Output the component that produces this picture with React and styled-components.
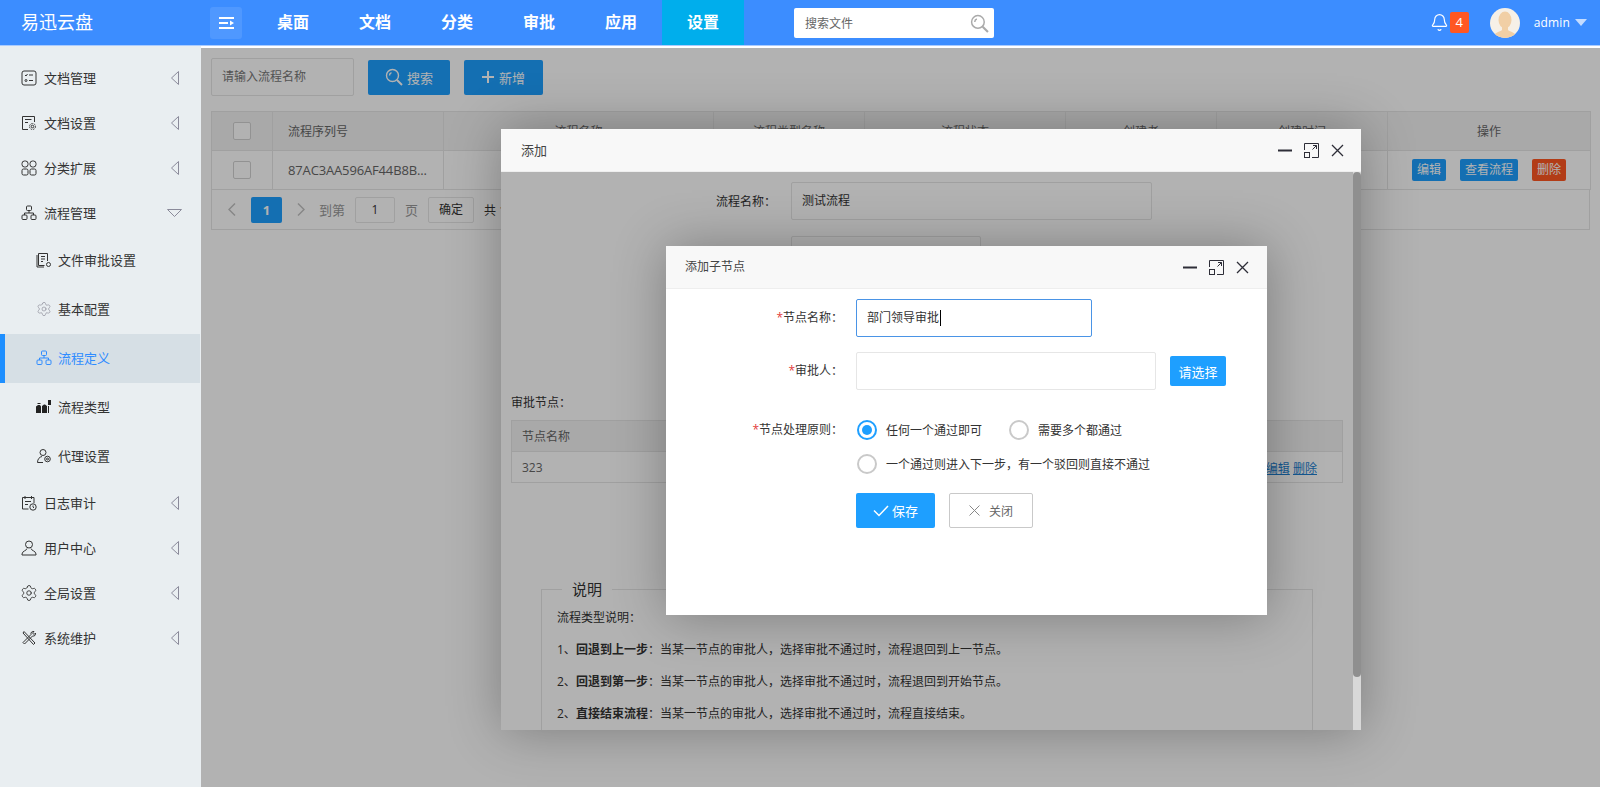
import React from 'react'
import styled, { createGlobalStyle } from 'styled-components'
import { Bell, Settings } from 'lucide-react'

const GlobalStyle = createGlobalStyle`
    html, body, #root {
        margin: 0;
        height: 100%;
    }
    body {
        font-family: "Open Sans", "Noto Sans CJK SC", sans-serif;
        font-size: 12px;
        color: #333;
        background: #fff;
        overflow: hidden;
    }
    * {
        box-sizing: border-box;
    }
`

const Page = styled.div`
    width: 1600px;
    height: 787px;
    display: flex;
    flex-direction: column;
    overflow: hidden;
`

const Header = styled.header`
    height: 46px;
    flex: none;
    display: flex;
    align-items: flex-start;
    background: #3c8dff;
    border-bottom: 1px solid #a9cbff;
    color: #fff;
`

const Logo = styled.div`
    width: 210px;
    height: 45px;
    padding-left: 21px;
    line-height: 45px;
    font-size: 18px;
`

const Toggle = styled.div`
    width: 32px;
    height: 32px;
    margin: 7px 10px 0 0;
    border-radius: 3px;
    background: #4f98ff;
    display: flex;
    align-items: center;
    justify-content: center;
`

const Nav = styled.nav`
    display: flex;
`

const NavItem = styled.div`
    width: 82px;
    height: 45px;
    line-height: 45px;
    text-align: center;
    font-size: 16px;
    font-weight: 700;
    background: ${p => (p.$active ? '#00aeec' : 'transparent')};
`

const TopSearch = styled.div`
    width: 200px;
    height: 30px;
    margin: 8px 0 0 50px;
    padding: 0 5px 0 11px;
    background: #fff;
    border-radius: 2px;
    color: #666;
    display: flex;
    align-items: center;
    justify-content: space-between;
`

const HeaderRight = styled.div`
    margin-left: auto;
    padding-right: 13px;
    height: 45px;
    display: flex;
    align-items: center;
`

const Badge = styled.span`
    width: 19px;
    height: 21px;
    margin-left: 1px;
    border-radius: 2px;
    background: #ff5722;
    font-size: 13px;
    text-align: center;
    line-height: 21px;
`

const Avatar = styled.div`
    width: 30px;
    height: 30px;
    margin-left: 21px;
    border-radius: 50%;
    overflow: hidden;
`

const UserName = styled.span`
    margin-left: 14px;
    font-size: 12px;
    letter-spacing: 0.15px;
`

const Caret = styled.span`
    width: 0;
    height: 0;
    margin-left: 5px;
    border-left: 6px solid transparent;
    border-right: 6px solid transparent;
    border-top: 7px solid #c4dcff;
`

const Body = styled.div`
    flex: 1;
    display: flex;
    min-height: 0;
`

const Sidebar = styled.aside`
    width: 201px;
    flex: none;
    padding-top: 10px;
    background: #e9eef1;
`

const MenuItem = styled.div`
    height: 45px;
    padding: 0 22px 2px 21px;
    display: flex;
    align-items: center;
    gap: 7px;
    font-size: 13px;
    color: #333;
    svg.arrow {
        margin-left: auto;
    }
    svg.arrow-down {
        margin: 0 -3px 0 auto;
    }
`

const SubItem = styled.div`
    height: 49px;
    padding: 0 0 2px ${p => (p.$active ? 31 : 36)}px;
    display: flex;
    align-items: center;
    gap: 6px;
    font-size: 13px;
    color: ${p => (p.$active ? '#2f8cff' : '#333')};
    background: ${p => (p.$active ? '#d6dfe5' : 'transparent')};
    border-left: ${p => (p.$active ? '5px solid #1e8fff' : 'none')};
    margin-right: ${p => (p.$active ? 1 : 0)}px;
`

const Main = styled.main`
    flex: 1;
    position: relative;
    padding: 10px;
    border-top: 2px solid #fff;
    background: #fff;
`

const Toolbar = styled.div`
    display: flex;
    align-items: center;
    height: 38px;
    gap: 14px;
    margin-bottom: 15px;
`

const TextInput = styled.div`
    width: ${p => p.$w}px;
    height: 38px;
    padding-left: 10px;
    line-height: 36px;
    border: 1px solid ${p => (p.$focus ? '#4a94e6' : '#e6e6e6')};
    border-radius: 2px;
    background: #fff;
    color: ${p => p.$color || '#333'};
`

const Caretline = styled.span`
    display: inline-block;
    width: 1px;
    height: 16px;
    margin-left: 1px;
    background: #000;
    vertical-align: -4px;
`

const Button = styled.button`
    height: ${p => p.$h || 35}px;
    width: ${p => p.$w}px;
    padding: 0;
    border: 0;
    border-radius: 2px;
    background: #1e9fff;
    color: #fff;
    font: inherit;
    font-size: 13px;
    display: flex;
    align-items: center;
    justify-content: center;
    gap: ${p => p.$gap || 5}px;
`

const OutlineButton = styled(Button)`
    border: 1px solid #c9c9c9;
    background: #fff;
    color: #666;
    font-size: 12px;
`

const Table = styled.table`
    width: ${p => p.$w}px;
    table-layout: fixed;
    border-collapse: collapse;
    border: 1px solid #e6e6e6;
    th, td {
        height: ${p => p.$row || 39}px;
        padding: 0;
        border: 1px solid #e6e6e6;
        font-weight: 400;
        font-size: 12px;
        color: #666;
        text-align: center;
    }
    th {
        background: #f2f2f2;
    }
    .left {
        text-align: left;
        padding-left: 15px;
    }
    td.left {
        font-size: 13px;
        letter-spacing: -0.15px;
    }
`

const Check = styled.span`
    display: inline-block;
    width: 18px;
    height: 18px;
    border: 1px solid #d2d2d2;
    border-radius: 2px;
    background: #fff;
    vertical-align: middle;
`

const Actions = styled.div`
    display: flex;
    justify-content: center;
    gap: 14px;
`

const ActionBtn = styled.span`
    height: 22px;
    padding: 0 5px;
    line-height: 22px;
    border-radius: 2px;
    color: #fff;
    font-size: 12px;
    background: ${p => (p.$danger ? '#ff5722' : '#1e9fff')};
`

const Pager = styled.div`
    width: 1379px;
    height: 40px;
    padding-left: 16px;
    border: 1px solid #e6e6e6;
    border-top: 0;
    display: flex;
    align-items: center;
    color: #999;
    font-size: 13px;
`

const PageNum = styled.span`
    width: 31px;
    height: 26px;
    margin: 0 15px 0 15px;
    line-height: 26px;
    text-align: center;
    font-weight: 700;
    font-size: 13px;
    color: #fff;
    background: #1e9fff;
    border-radius: 2px;
`

const PageBox = styled.span`
    width: ${p => p.$w}px;
    height: 26px;
    margin: 0 10px;
    line-height: 24px;
    font-size: 12px;
    text-align: center;
    color: #333;
    background: #fff;
    border: 1px solid #e6e6e6;
    border-radius: 2px;
`

const PagerLabel = styled.span`
    margin-left: 14px;
`

const PagerTotal = styled.span`
    color: #333;
    font-size: 12px;
    white-space: nowrap;
`

const Shade = styled.div`
    position: absolute;
    inset: 0;
    background: rgba(0, 0, 0, 0.3);
`

const Modal = styled.div`
    position: absolute;
    left: ${p => p.$left}px;
    top: ${p => p.$top}px;
    width: ${p => p.$w}px;
    height: ${p => p.$h}px;
    background: #fff;
    box-shadow: 1px 1px 50px rgba(0, 0, 0, 0.3);
    display: flex;
    flex-direction: column;
`

const ModalHead = styled.div`
    height: 43px;
    flex: none;
    padding: 0 ${p => p.$right}px 0 ${p => p.$pad}px;
    display: flex;
    align-items: center;
    justify-content: space-between;
    background: #f8f8f8;
    border-bottom: 1px solid #eee;
    color: #444;
    font-size: ${p => p.$size}px;
`

const ModalTitle = styled.span`
    margin-top: -2px;
`

const WinControls = styled.div`
    display: flex;
    align-items: center;
    gap: 12px;
    color: #2e2e38;
`

const ModalBody = styled.div`
    flex: 1;
    position: relative;
    overflow: hidden;
    &::after {
        content: '';
        position: absolute;
        inset: 0;
        background: rgba(0, 0, 0, 0.3);
    }
`

const ScrollTrack = styled.div`
    position: absolute;
    top: 0;
    right: 0;
    bottom: 0;
    width: 8px;
    z-index: 1;
    background: #d8d8d8;
`

const ScrollThumb = styled.div`
    height: 505px;
    background: #8f8f8f;
    border-radius: 4px;
`

const OuterRow = styled.div`
    display: flex;
    align-items: center;
    margin-top: ${p => p.$top}px;
    gap: 15px;
`

const OuterLabel = styled.div`
    width: 275px;
    text-align: right;
    color: #333;
`

const NodeTitle = styled.div`
    margin: 120px 0 8px 10px;
    line-height: 18px;
`

const NodeTable = styled(Table)`
    margin-left: 10px;
    th, td {
        height: 31px;
    }
    .left {
        padding-left: 10px;
    }
    td.left {
        font-size: 12px;
        letter-spacing: 0;
    }
`

const NodeRow = styled.div`
    display: flex;
    justify-content: space-between;
    padding: 1px 25px 0 0;
    a {
        color: #1e7fd0;
        text-decoration: underline;
    }
`

const Fieldset = styled.fieldset`
    width: 772px;
    margin: 96px 0 0 40px;
    padding: 0 15px;
    min-width: 0;
    border: 1px solid #e6e6e6;
    height: 170px;
    legend {
        margin-left: 5px;
        padding: 0 10px;
        font-size: 15px;
        line-height: 20px;
    }
    p {
        margin: 0 0 14px;
        line-height: 18px;
        color: #333;
    }
    p:first-of-type {
        margin-top: 10px;
    }
`

const Form = styled.div`
    padding-top: 10px;
`

const FormRow = styled.div`
    display: flex;
    align-items: ${p => (p.$top ? 'flex-start' : 'center')};
    margin-bottom: ${p => p.$mb}px;
    gap: 13px;
`

const FormLabel = styled.label`
    width: 177px;
    flex: none;
    text-align: right;
    color: #333;
    line-height: ${p => p.$lh || 38}px;
    em {
        font-style: normal;
        color: #e23b3b;
    }
`

const RadioGroup = styled.div`
    display: grid;
    grid-template-columns: 152px auto;
    grid-auto-rows: 34px;
    align-items: center;
    justify-content: start;
    padding-left: 1px;
`

const Radio = styled.div`
    display: flex;
    align-items: center;
    gap: 9px;
    color: #333;
    white-space: nowrap;
    grid-column: ${p => (p.$wide ? '1 / span 2' : 'auto')};
`

const RadioDot = styled.span`
    width: 20px;
    height: 20px;
    border-radius: 50%;
    border: 2px solid ${p => (p.$on ? '#1e9fff' : '#c9c9c9')};
    display: flex;
    align-items: center;
    justify-content: center;
    &::after {
        content: '';
        width: 10px;
        height: 10px;
        border-radius: 50%;
        background: ${p => (p.$on ? '#1e9fff' : 'transparent')};
    }
`

const FormActions = styled.div`
    display: flex;
    gap: 14px;
    margin-left: 190px;
`

const Line = ({ children, ...rest }) => (
    <svg width="16" height="16" viewBox="0 0 16 16" fill="none" stroke="currentColor" strokeWidth="1" {...rest}>
        {children}
    </svg>
)

const icons = {
    doc: <Line><rect x="1" y="1" width="14" height="14" rx="2" /><path d="M4 5l1 1 1.500-2M8 5h4M8 10.500h4" /><circle cx="5" cy="10.500" r="1" /></Line>,
    docset: <Line><path d="M7 14.500H1.500v-13h12V7M4 4.500h6.500M4 7.500h3" /><circle cx="11.500" cy="11.500" r="1.300" /><circle cx="11.500" cy="11.500" r="3" strokeDasharray="1.500 1" /></Line>,
    cats: <Line><rect x="1" y="1" width="6" height="6" rx="2.500" /><rect x="9" y="1" width="6" height="6" rx="2.500" /><rect x="1" y="9" width="6" height="6" rx="1.500" /><rect x="9" y="9" width="6" height="6" rx="1.500" /></Line>,
    flow: <Line><rect x="5.500" y="1" width="5" height="4.500" rx="1" /><rect x="1" y="10" width="5" height="4.500" rx="1" /><rect x="10" y="10" width="5" height="4.500" rx="1" /><path d="M8 5.500V8M3.500 10V8h9v2" /></Line>,
    file: <Line><path d="M11.500 9V1.500h-9v12h6M5 4.500h4M5 7h4M5 9.500h2" /><path d="M1 3v12h7" /><circle cx="12.500" cy="12.500" r="2" /></Line>,
    type: <svg width="16" height="16" viewBox="0 0 16 16" fill="#222"><path d="M0 7.500L2 6h2l1 1.500V14H0zM6 7l2-1.500h1L11 7v7H6zM12 1h3v5h-3z" /><path d="M1.500 4h3v1h-3zM12 7h1v7h-1z" /></svg>,
    agent: <Line><circle cx="7" cy="4.500" r="3" /><path d="M1.500 14.500c0-3.500 2-5.500 4.500-6M7 14.500H1.500" /><circle cx="11.500" cy="11" r="2.800" /><circle cx="11.500" cy="11" r="1" /></Line>,
    log: <Line><path d="M7.500 14H1.500V2.500h11.500V8M4 1v3M10.500 1v3M4 6.500h6M4 9.500h3" /><circle cx="12" cy="12" r="3.200" /><path d="M12 10.500V12l1 1" /></Line>,
    user: <Line><circle cx="8" cy="4.500" r="3.500" /><path d="M6 8.500c0 2-5 2.500-5 5.500v1h14v-1c0-3-5-3.500-5-5.500" /></Line>,
    tools: <Line><path d="M3 1.500l11 11.500-1.500 1.500L2 3z" /><path d="M13 1.500c-2-.5-3.500 1-3 3L2 12.500 3.500 14l8-8c2 .5 3.500-1 3-3L13 4.500 11.500 3z" /></Line>,
}

const ArrowLeft = () => (
    <svg className="arrow" width="8" height="14" viewBox="0 0 8 14" fill="none" stroke="#8a8a9a" strokeWidth="1"><path d="M7.500.5L.5 7l7 6.500z" /></svg>
)

const ArrowDown = () => (
    <svg className="arrow-down" width="15" height="8" viewBox="0 0 15 8" fill="none" stroke="#8a8a9a" strokeWidth="1"><path d="M.5.500h14L7.500 7.500z" /></svg>
)

const Chevron = ({ flip }) => (
    <svg width="8" height="13" viewBox="0 0 8 13" fill="none" stroke="#c2c2c2" strokeWidth="1.500"><path d={flip ? 'M1 .5l6 6-6 6' : 'M7 .5l-6 6 6 6'} /></svg>
)

const SearchGlass = ({ color, size = 18 }) => (
    <svg width={size} height={size} viewBox="0 0 18 18" fill="none" stroke={color} strokeWidth="1.400">
        <circle cx="7.500" cy="7.500" r="6" />
        <path d="M12 12l5 5" strokeWidth="2" />
        <path d="M4.500 7.500a3 3 0 0 1 2-2.800" />
    </svg>
)

const Controls = () => (
    <WinControls>
        <svg width="14" height="14" viewBox="0 0 14 14" stroke="currentColor" strokeWidth="2"><path d="M0 7.500h14" /></svg>
        <svg width="15" height="15" viewBox="0 0 15 15" fill="none" stroke="currentColor" strokeWidth="1"><path d="M.5 7V.5h14v14H8M8.500 6.500l4-4M9 2.500h3.500V6" /><rect x=".5" y="9.500" width="5" height="5" /></svg>
        <svg width="13" height="13" viewBox="0 0 13 13" stroke="currentColor" strokeWidth="1.300"><path d="M1 1l11 11M12 1L1 12" /></svg>
    </WinControls>
)

const topMenu = [
    { label: '文档管理', icon: 'doc' },
    { label: '文档设置', icon: 'docset' },
    { label: '分类扩展', icon: 'cats' },
]

const subMenu = [
    { label: '文件审批设置', icon: icons.file },
    { label: '基本配置', icon: <Settings size={16} strokeWidth={1} color="#8d8d99" /> },
    { label: '流程定义', icon: icons.flow, active: true },
    { label: '流程类型', icon: icons.type },
    { label: '代理设置', icon: icons.agent },
]

const bottomMenu = [
    { label: '日志审计', icon: icons.log },
    { label: '用户中心', icon: icons.user },
    { label: '全局设置', icon: <Settings size={18} strokeWidth={1.200} style={{ margin: '0 -1px' }} /> },
    { label: '系统维护', icon: icons.tools },
]

const navItems = ['桌面', '文档', '分类', '审批', '应用', '设置']

const columns = [61, 171, 270, 151, 201, 151, 171, 203]

const App = () => {
    return (
        <Page>
            <GlobalStyle />
            <Header>
                <Logo>易迅云盘</Logo>
                <Toggle>
                    <svg width="15" height="12" viewBox="0 0 15 12" fill="#fff">
                        <path d="M0 0h15v2H0zM0 10h15v2H0zM0 5h9v2H0zM11 3.500L15 6l-4 2.500z" />
                    </svg>
                </Toggle>
                <Nav>
                    {navItems.map((item, idx) => (
                        <NavItem key={item} $active={idx === 5}>{item}</NavItem>
                    ))}
                </Nav>
                <TopSearch>
                    搜索文件
                    <SearchGlass color="#aaa" size={19} />
                </TopSearch>
                <HeaderRight>
                    <Bell size={19} strokeWidth={1.500} />
                    <Badge>4</Badge>
                    <Avatar>
                        <svg width="30" height="30" viewBox="0 0 30 30">
                            <rect width="30" height="30" fill="#f6f0e7" />
                            <path d="M3 30c1-6 7-6 9-8v-3h6v3c2 2 8 2 9 8z" fill="#f1cfa5" />
                            <ellipse cx="15" cy="12" rx="6.500" ry="8.500" fill="#f1cfa5" />
                        </svg>
                    </Avatar>
                    <UserName>admin</UserName>
                    <Caret />
                </HeaderRight>
            </Header>
            <Body>
                <Sidebar>
                    {topMenu.map(item => (
                        <MenuItem key={item.label}>
                            {icons[item.icon]}
                            {item.label}
                            <ArrowLeft />
                        </MenuItem>
                    ))}
                    <MenuItem>
                        {icons.flow}
                        流程管理
                        <ArrowDown />
                    </MenuItem>
                    {subMenu.map(item => (
                        <SubItem key={item.label} $active={item.active}>
                            {item.icon}
                            {item.label}
                        </SubItem>
                    ))}
                    {bottomMenu.map(item => (
                        <MenuItem key={item.label}>
                            {item.icon}
                            {item.label}
                            <ArrowLeft />
                        </MenuItem>
                    ))}
                </Sidebar>
                <Main>
                    <Toolbar>
                        <TextInput $w={143} $color="#777">请输入流程名称</TextInput>
                        <Button $w={82} $gap={4}><SearchGlass color="#fff" size={18} />搜索</Button>
                        <Button $w={79}>
                            <svg width="12" height="12" viewBox="0 0 12 12" fill="#fff"><path d="M5 0h2v5h5v2H7v5H5V7H0V5h5z" /></svg>
                            新增
                        </Button>
                    </Toolbar>
                    <Table $w={1379}>
                        <colgroup>
                            {columns.map((w, idx) => <col key={idx} style={{ width: w }} />)}
                        </colgroup>
                        <thead>
                            <tr>
                                <th><Check /></th>
                                <th className="left">流程序列号</th>
                                <th>流程名称</th>
                                <th>流程类型名称</th>
                                <th>流程状态</th>
                                <th>创建者</th>
                                <th>创建时间</th>
                                <th>操作</th>
                            </tr>
                        </thead>
                        <tbody>
                            <tr>
                                <td><Check /></td>
                                <td className="left">87AC3AA596AF44B8B...</td>
                                <td />
                                <td />
                                <td />
                                <td />
                                <td />
                                <td>
                                    <Actions>
                                        <ActionBtn>编辑</ActionBtn>
                                        <ActionBtn>查看流程</ActionBtn>
                                        <ActionBtn $danger>删除</ActionBtn>
                                    </Actions>
                                </td>
                            </tr>
                        </tbody>
                    </Table>
                    <Pager>
                        <Chevron />
                        <PageNum>1</PageNum>
                        <Chevron flip />
                        <PagerLabel>到第</PagerLabel>
                        <PageBox $w={40}>1</PageBox>
                        页
                        <PageBox $w={46}>确定</PageBox>
                        <PagerTotal>共 1 条</PagerTotal>
                    </Pager>

                    <Shade />

                    <Modal $left={300} $top={81} $w={860} $h={601}>
                        <ModalHead $pad={20} $right={17} $size={13}>
                            <ModalTitle>添加</ModalTitle>
                            <Controls />
                        </ModalHead>
                        <ModalBody>
                            <OuterRow $top={10}>
                                <OuterLabel>流程名称：</OuterLabel>
                                <TextInput $w={361}>测试流程</TextInput>
                            </OuterRow>
                            <OuterRow $top={16}>
                                <OuterLabel />
                                <TextInput $w={190} />
                            </OuterRow>
                            <NodeTitle>审批节点：</NodeTitle>
                            <NodeTable $w={832}>
                                <thead>
                                    <tr>
                                        <th className="left">节点名称</th>
                                    </tr>
                                </thead>
                                <tbody>
                                    <tr>
                                        <td className="left">
                                            <NodeRow>
                                                323
                                                <span><a>编辑</a> <a>删除</a></span>
                                            </NodeRow>
                                        </td>
                                    </tr>
                                </tbody>
                            </NodeTable>
                            <Fieldset>
                                <legend>说明</legend>
                                <p>流程类型说明：</p>
                                <p>1、<b>回退到上一步</b>：当某一节点的审批人，选择审批不通过时，流程退回到上一节点。</p>
                                <p>2、<b>回退到第一步</b>：当某一节点的审批人，选择审批不通过时，流程退回到开始节点。</p>
                                <p>2、<b>直接结束流程</b>：当某一节点的审批人，选择审批不通过时，流程直接结束。</p>
                            </Fieldset>
                            <ScrollTrack><ScrollThumb /></ScrollTrack>
                        </ModalBody>
                    </Modal>

                    <Modal $left={465} $top={198} $w={601} $h={369}>
                        <ModalHead $pad={19} $right={18} $size={12}>
                            <ModalTitle>添加子节点</ModalTitle>
                            <Controls />
                        </ModalHead>
                        <Form>
                            <FormRow $mb={15}>
                                <FormLabel><em>*</em>节点名称：</FormLabel>
                                <TextInput $w={236} $focus>部门领导审批<Caretline /></TextInput>
                            </FormRow>
                            <FormRow $mb={23}>
                                <FormLabel><em>*</em>审批人：</FormLabel>
                                <TextInput $w={300} />
                                <Button $w={56} $h={30} style={{ marginLeft: 1 }}>请选择</Button>
                            </FormRow>
                            <FormRow $top $mb={12}>
                                <FormLabel $lh={34}><em>*</em>节点处理原则：</FormLabel>
                                <RadioGroup>
                                    <Radio><RadioDot $on />任何一个通过即可</Radio>
                                    <Radio><RadioDot />需要多个都通过</Radio>
                                    <Radio $wide><RadioDot />一个通过则进入下一步，有一个驳回则直接不通过</Radio>
                                </RadioGroup>
                            </FormRow>
                            <FormActions>
                                <Button $w={79} $gap={3}>
                                    <svg width="16" height="12" viewBox="0 0 16 12" fill="none" stroke="#fff" strokeWidth="1.500"><path d="M1 5.500L6 10.500 15 1" /></svg>
                                    保存
                                </Button>
                                <OutlineButton $w={84} $gap={9}>
                                    <svg width="11" height="11" viewBox="0 0 11 11" stroke="#888" strokeWidth="1"><path d="M.5.500l10 10M10.500.500l-10 10" /></svg>
                                    关闭
                                </OutlineButton>
                            </FormActions>
                        </Form>
                    </Modal>
                </Main>
            </Body>
        </Page>
    )
}

export default App
